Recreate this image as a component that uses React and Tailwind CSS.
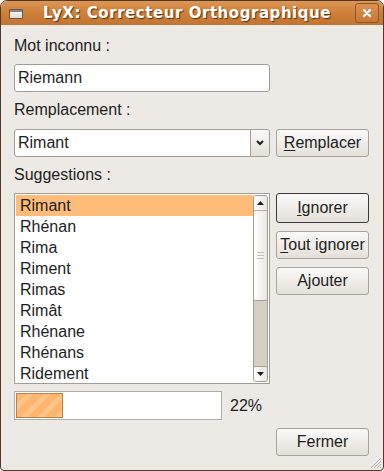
import React from "react";

const suggestions = [
  "Rimant",
  "Rhénan",
  "Rima",
  "Riment",
  "Rimas",
  "Rimât",
  "Rhénane",
  "Rhénans",
  "Ridement",
];

const Button = ({ children, focused, className = "" }) => (
  <button
    className={`h-[28px] w-[93px] rounded-[3px] border bg-gradient-to-b from-[#fbfaf9] to-[#e4dfd8] text-[16px] text-[#1e1e1e] flex items-center justify-center ${
      focused ? "border-[#3b3a38]" : "border-[#a9a39a]"
    } ${className}`}
  >
    {children}
  </button>
);

const App = () => {
  return (
    <div className="w-[384px] h-[471px] bg-[#f6f3f0] font-['Liberation_Sans',Arial,sans-serif] text-[#1e1e1e]">
      <div className="w-full h-full flex flex-col rounded-t-[7px] rounded-b-[4px] border border-[#4c3b2b] bg-[#edeae5] overflow-hidden">
        {/* Title bar */}
        <div className="h-[24px] shrink-0 flex items-center bg-gradient-to-b from-[#dd9653] via-[#cd8038] to-[#c27533] relative">
          <div className="ml-[8px] w-[14px] h-[10px] mt-[1px] border border-[#6b5a48] bg-gradient-to-b from-[#ffffff] to-[#dcd7d0]">
            <div className="h-[2px] bg-[#8a8580]" />
          </div>
          <div className="flex-1 text-center font-['DejaVu_Sans',sans-serif] font-bold text-[15px] text-white [text-shadow:1px_1px_1px_#5a3210] tracking-[0.55px] -ml-[4px]">
            LyX: Correcteur Orthographique
          </div>
          <div className="mr-[4px] w-[24px] h-[20px] rounded-[3px] border border-[#8f5524] bg-gradient-to-b from-[#d99152] to-[#c57937] flex items-center justify-center">
            <svg width="10" height="10" viewBox="0 0 10 10">
              <path d="M2 2 L8 8 M8 2 L2 8" stroke="#ffffff" strokeWidth="2.4" strokeLinecap="round" />
            </svg>
          </div>
        </div>

        {/* Body */}
        <div className="flex-1 flex flex-col pl-[13px] pr-[13px] relative">
          <div className="mt-[12px] h-[18px] leading-[18px] text-[16px]">Mot inconnu :</div>
          <div className="mt-[9px] w-[256px] h-[28px] rounded-[3px] border border-[#a39d95] bg-white flex items-center pl-[3px] text-[16px]">
            Riemann
          </div>

          <div className="mt-[9px] h-[18px] leading-[18px] text-[16px]">Remplacement :</div>
          <div className="mt-[10px] flex gap-[6px]">
            <div className="w-[256px] h-[28px] rounded-[3px] border border-[#a39d95] bg-white flex items-center">
              <span className="flex-1 pl-[3px] text-[16px]">Rimant</span>
              <div className="w-[19px] h-full border-l border-[#a39d95] rounded-r-[3px] bg-gradient-to-b from-[#fbfaf9] to-[#e4dfd8] flex items-center justify-center">
                <svg width="8" height="6" viewBox="0 0 8 6">
                  <path d="M1 1 L4 4 L7 1" stroke="#1e1e1e" strokeWidth="2" fill="none" />
                </svg>
              </div>
            </div>
            <Button>
              <span>
                <span className="underline underline-offset-[2px]">R</span>emplacer
              </span>
            </Button>
          </div>

          <div className="mt-[9px] h-[18px] leading-[18px] text-[16px]">Suggestions :</div>
          <div className="mt-[9px] flex gap-[6px]">
            <div className="w-[256px] h-[191px] border border-[#a39d95] bg-white flex p-[1px]">
              <div className="flex-1 flex flex-col">
                {suggestions.map((s, i) => (
                  <div
                    key={s}
                    className={`h-[21px] leading-[21px] pl-[4px] text-[16px] ${i === 0 ? "bg-[#fdbc78]" : ""}`}
                  >
                    {s}
                  </div>
                ))}
              </div>
              {/* Scrollbar */}
              <div className="w-[15px] flex flex-col bg-[#d6cfc5] rounded-[3px] border border-[#a39d95]">
                <div className="h-[15px] shrink-0 rounded-t-[2px] border-b border-[#b5aea4] bg-gradient-to-r from-[#ffffff] to-[#ebe7e1] flex items-center justify-center">
                  <svg width="7" height="4" viewBox="0 0 7 4">
                    <path d="M0 4 L3.5 0 L7 4 Z" fill="#1e1e1e" />
                  </svg>
                </div>
                <div className="h-[90px] shrink-0 rounded-b-[2px] border-b border-[#a39d95] bg-gradient-to-r from-[#ffffff] to-[#ebe7e1] flex flex-col items-center justify-center gap-[2px]">
                  <div className="w-[7px] h-px bg-[#c7c1b8]" />
                  <div className="w-[7px] h-px bg-[#c7c1b8]" />
                  <div className="w-[7px] h-px bg-[#c7c1b8]" />
                </div>
                <div className="flex-1" />
                <div className="h-[15px] shrink-0 rounded-[2px] border-t border-[#a39d95] bg-gradient-to-r from-[#ffffff] to-[#ebe7e1] flex items-center justify-center">
                  <svg width="7" height="4" viewBox="0 0 7 4">
                    <path d="M0 0 L3.5 4 L7 0 Z" fill="#1e1e1e" />
                  </svg>
                </div>
              </div>
            </div>
            <div className="flex flex-col gap-[8px]">
              <Button focused className="h-[30px]">
                <span>
                  <span className="underline underline-offset-[2px]">I</span>gnorer
                </span>
              </Button>
              <Button>
                <span>
                  <span className="underline underline-offset-[2px]">T</span>out ignorer
                </span>
              </Button>
              <Button>
                <span>
                  A<span className="underline underline-offset-[2px]">j</span>outer
                </span>
              </Button>
            </div>
          </div>

          <div className="mt-[7px] flex items-center">
            <div className="w-[208px] h-[29px] border border-[#b3ada5] bg-white p-px">
              <div className="w-[47px] h-full border border-[#b4824f] bg-[repeating-linear-gradient(135deg,#ffb56e_0px,#ffb56e_7px,#ffc588_7px,#ffc588_12px)]" />
            </div>
            <span className="ml-[8px] text-[16px]">22%</span>
          </div>

          <div className="mt-[8px] flex justify-end pr-[1px]">
            <Button>Fermer</Button>
          </div>

          <svg className="absolute right-[1px] bottom-[1px]" width="14" height="14" viewBox="0 0 14 14">
            <path d="M13 3 L3 13 M13 6 L6 13 M13 9 L9 13 M13 12 L12 13" stroke="#b9b2a8" strokeWidth="1" />
          </svg>
        </div>
      </div>
    </div>
  );
};

export default App;
